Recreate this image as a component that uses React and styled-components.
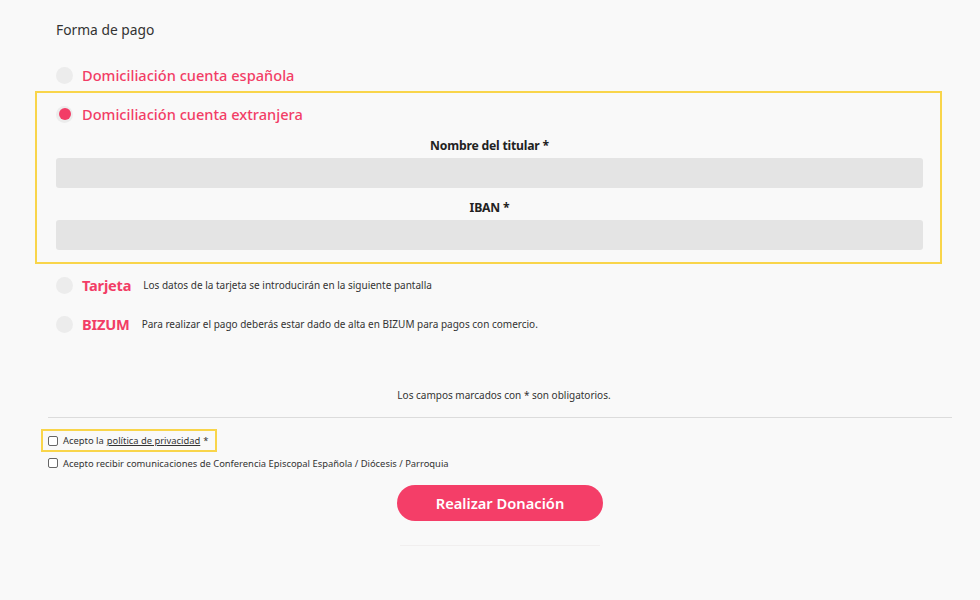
import React from 'react'
import styled, { createGlobalStyle } from 'styled-components'

const GlobalStyle = createGlobalStyle`
  html, body {
    margin: 0;
    padding: 0;
    background: #f9f9f9;
    font-family: "Noto Sans", "Open Sans", sans-serif;
    color: #333;
  }
`

const Page = styled.div`
  width: 980px;
  height: 600px;
  box-sizing: border-box;
  padding: 19px 28px 0 48px;
`

const Heading = styled.h3`
  margin: 0 0 0 8px;
  font-size: 13.8px;
  font-weight: 400;
  color: #333;
  line-height: 22px;
`

const Options = styled.div`
  margin-top: 15px;
  display: flex;
  flex-direction: column;
`

const Option = styled.div`
  box-sizing: border-box;
  margin: ${p => (p.$highlight ? '-4px 0 2px -13px' : '0')};
  width: ${p => (p.$highlight ? '907px' : 'auto')};
  padding: ${p => (p.$highlight ? '9px 17px 0 19px' : '7px 0 8px 8px')};
  border: ${p => (p.$highlight ? '2px solid #f9d54a' : 'none')};
  height: ${p => (p.$highlight ? '173px' : '39px')};
`

const OptionHead = styled.label`
  display: flex;
  align-items: center;
  height: 24px;
`

const Radio = styled.span`
  width: 17px;
  height: 17px;
  border-radius: 50%;
  background: #ececec;
  display: flex;
  align-items: center;
  justify-content: center;
  flex: none;
  &::after {
    content: '';
    width: 12px;
    height: 12px;
    border-radius: 50%;
    background: ${p => (p.$checked ? '#f23d66' : 'transparent')};
  }
`

const OptionTitle = styled.span`
  margin-left: 9px;
  color: #f23d66;
  font-size: 14.6px;
  font-weight: ${p => (p.$big ? 700 : 500)};
  letter-spacing: ${p => (p.$big ? '-0.2px' : '0')};
`

const OptionNote = styled.span`
  margin-left: 12px;
  font-size: 10px;
  color: #333;
`

const Field = styled.div`
  display: flex;
  flex-direction: column;
  align-items: center;
  margin-top: 10px;
`

const FieldLabel = styled.label`
  font-size: 12.2px;
  font-weight: 700;
  color: #222;
  letter-spacing: -0.2px;
  line-height: 20px;
`

const Input = styled.input`
  box-sizing: border-box;
  margin-top: 2px;
  width: 100%;
  height: 30px;
  border: none;
  border-radius: 3px;
  background: #e4e4e4;
  outline: none;
`

const Required = styled.p`
  margin: 44px 0 0 0;
  text-align: center;
  padding-left: 8px;
  font-size: 10px;
  color: #333;
`

const Rule = styled.hr`
  margin: 15px 0 0 0;
  border: none;
  border-top: 1px solid #dcdcdc;
`

const Checks = styled.div`
  margin-top: 11px;
  display: flex;
  flex-direction: column;
  align-items: flex-start;
`

const CheckRow = styled.label`
  display: inline-flex;
  align-items: center;
  box-sizing: border-box;
  height: ${p => (p.$highlight ? '23px' : '22px')};
  margin-left: -7px;
  padding: 0 7px 0 5px;
  border: 2px solid ${p => (p.$highlight ? '#f9d54a' : 'transparent')};
  font-size: 9.4px;
  color: #333;
`

const Box = styled.span`
  width: 8px;
  height: 8px;
  border: 1px solid #666;
  border-radius: 2px;
  background: #fff;
  margin-right: 5px;
  flex: none;
`

const PolicyLink = styled.a`
  color: #333;
  text-decoration: underline;
  margin: 0 3px;
`

const Actions = styled.div`
  display: flex;
  flex-direction: column;
  align-items: center;
  margin-top: 11px;
`

const DonateButton = styled.button`
  width: 206px;
  height: 36px;
  border: none;
  border-radius: 18px;
  background: #f43e68;
  color: #fff;
  font-family: inherit;
  font-size: 14.7px;
  font-weight: 600;
`

const Divider = styled.div`
  margin-top: 24px;
  width: 200px;
  height: 1px;
  background: #f1efef;
`

const methods = [
  { id: 'es', title: 'Domiciliación cuenta española' },
  { id: 'ext', title: 'Domiciliación cuenta extranjera', checked: true },
  { id: 'card', title: 'Tarjeta', big: true, note: 'Los datos de la tarjeta se introducirán en la siguiente pantalla' },
  { id: 'bizum', title: 'BIZUM', big: true, note: 'Para realizar el pago deberás estar dado de alta en BIZUM para pagos con comercio.' },
]

function App() {
  return (
    <>
      <GlobalStyle />
      <Page>
        <Heading>Forma de pago</Heading>
        <Options>
          {methods.map(m => (
            <Option key={m.id} $highlight={m.checked}>
              <OptionHead>
                <Radio $checked={m.checked} />
                <OptionTitle $big={m.big}>{m.title}</OptionTitle>
                {m.note && <OptionNote>{m.note}</OptionNote>}
              </OptionHead>
              {m.checked && (
                <>
                  <Field>
                    <FieldLabel>Nombre del titular *</FieldLabel>
                    <Input />
                  </Field>
                  <Field>
                    <FieldLabel>IBAN *</FieldLabel>
                    <Input />
                  </Field>
                </>
              )}
            </Option>
          ))}
        </Options>
        <Required>Los campos marcados con * son obligatorios.</Required>
        <Rule />
        <Checks>
          <CheckRow $highlight>
            <Box />
            Acepto la <PolicyLink href="#">política de privacidad </PolicyLink>*
          </CheckRow>
          <CheckRow>
            <Box />
            Acepto recibir comunicaciones de Conferencia Episcopal Española / Diócesis / Parroquia
          </CheckRow>
        </Checks>
        <Actions>
          <DonateButton>Realizar Donación</DonateButton>
          <Divider />
        </Actions>
      </Page>
    </>
  )
}

export default App
